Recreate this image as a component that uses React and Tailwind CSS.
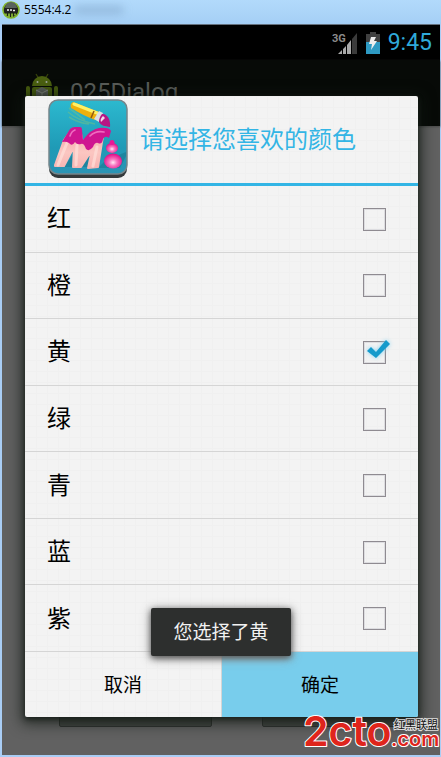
import { useState } from 'react'

const colors = ['红', '橙', '黄', '绿', '青', '蓝', '紫']

function EmulatorIcon() {
  return (
    <svg width="18" height="18" viewBox="0 0 18 18" className="shrink-0">
      <circle cx="9" cy="9" r="8" fill="#1c2119" stroke="#83b62c" strokeWidth="1.6" />
      <path d="M3 7a6 6 0 0 1 12 0z" fill="#59635c" />
      <rect x="2.5" y="7" width="13" height="4.5" rx="1" fill="#222" />
      <path d="M5 9h2M8 9h2M11 9.5h2" stroke="#eee" strokeWidth="1.4" />
      <path d="M4 12.5v2M7 12.5v3.5M10 12.5v3.5M13 12.5v2" stroke="#94c83d" strokeWidth="1.6" />
    </svg>
  )
}

function AndroidIcon() {
  return (
    <svg width="32" height="42" viewBox="0 0 32 42" className="shrink-0">
      <path d="M10 2l3 5M22 2l-3 5" stroke="#35420c" strokeWidth="1.3" />
      <path d="M6 14a10 10 0 0 1 20 0z" fill="#4a5f10" />
      <circle cx="11.5" cy="10" r="1" fill="#a0a8a0" />
      <circle cx="20.5" cy="10" r="1" fill="#a0a8a0" />
      <rect x="0" y="14" width="4" height="16" rx="2" fill="#455a0e" />
      <rect x="28" y="14" width="4" height="16" rx="2" fill="#455a0e" />
      <rect x="6" y="15" width="20" height="21" rx="2" fill="#455a0e" />
      <path d="M16 15l6 3v7l-6 4-6-4v-7z" fill="#565b56" />
      <path d="M10 18l6 3 6-3M16 21v8" stroke="#80857d" fill="none" />
    </svg>
  )
}

function SignalIcon() {
  return (
    <svg width="26" height="24" viewBox="0 0 26 24">
      <text x="0" y="11" fill="#8b8b8b" fontFamily="Roboto, sans-serif" fontWeight="700" fontSize="11">3G</text>
      <path d="M6 23L10 19V23zM11 18L14 15V23H11zM15 14L19 9V23H15z" fill="#aaa" />
      <path d="M20 8L25 2V23H20z" fill="#3b3b3b" />
    </svg>
  )
}

function BatteryIcon() {
  return (
    <svg width="14" height="22" viewBox="0 0 14 22">
      <path d="M4 0h6v2h4v8H0V2h4z" fill="#404040" />
      <path d="M0 10h14v12H0z" fill="#2e9ac3" />
      <path d="M5 5h5L8 9h3L5 18l1-6H3z" fill="#eee" />
    </svg>
  )
}

function PaintIcon() {
  return (
    <svg width="80" height="80" viewBox="0 0 80 80" className="shrink-0">
      <defs>
        <linearGradient id="tile" x1="0" y1="0" x2="0" y2="1">
          <stop offset="0" stopColor="#2cb9cf" />
          <stop offset=".65" stopColor="#1f9ab6" />
          <stop offset="1" stopColor="#2b93b4" />
        </linearGradient>
        <linearGradient id="leg" x1="0" y1="0" x2="0" y2="1">
          <stop offset="0" stopColor="#f2a0a4" />
          <stop offset=".6" stopColor="#fbc6c1" />
          <stop offset="1" stopColor="#f7b5b3" />
        </linearGradient>
        <radialGradient id="ball" cx=".5" cy=".6" r=".55">
          <stop offset="0" stopColor="#ffeaf6" />
          <stop offset=".4" stopColor="#f977c1" />
          <stop offset="1" stopColor="#e3128c" />
        </radialGradient>
      </defs>
      <rect x="1" y="6" width="78" height="73" rx="9" fill="#34393b" />
      <rect x="1" y="1" width="78" height="74" rx="9" fill="url(#tile)" stroke="#75858a" strokeWidth="1.5" />
      <path d="M16 68l10-14v14zM33 68l8-14-1 14zM50 69l8-8 20-8v4l-6 12z" fill="#176f85" opacity=".45" />
      {/* painted body */}
      <path
        d="M7 66L16 41l8-11h8l3 14 13-12h8l-2 11-4 25-10 1 4-18-11 17-8 0 1-20-10 19-9 0z"
        fill="url(#leg)"
        stroke="url(#leg)"
        strokeWidth="2"
        strokeLinejoin="round"
      />
      <path d="M19 44L10 66M29 46l-1 20M49 48l-4 19" stroke="#ffe0da" strokeWidth="3" strokeLinecap="round" opacity=".7" />
      {/* glossy tops */}
      <path d="M14 43L22 30Q24 28 27 28H32Q34 28 34 31L35 41Q43 30 51 29Q61 28 63 32L61 39Q57 36 55 40Q54 46 50 44Q47 43 45 48Q41 53 38 50Q36 44 33 45Q29 46 27 43Q24 48 21 44Q18 42 14 43Z" fill="#cf1591" />
      <path d="M22 37c1-3 2-5 5-6M42 37c4-4 9-5 14-4" stroke="#ee6bc0" strokeWidth="1.6" fill="none" strokeLinecap="round" />
      {/* bottle */}
      <ellipse cx="65" cy="62" rx="9" ry="7.5" fill="url(#ball)" />
      <ellipse cx="64" cy="49" rx="6" ry="5" fill="url(#ball)" />
      <circle cx="64" cy="43.5" r="2.5" fill="#e81997" />
      {/* brush */}
      <path d="M20 13c8 7 17 10 27 12M21 18c6 4 12 6 20 7M21 9l16 12" stroke="#6fbf86" strokeWidth="1.6" opacity=".55" fill="none" />
      <path d="M25 3c9 3 17 7 26 10l-4 8C39 18 31 14 23 9c-1-3 0-5 2-6z" fill="#eeb00d" />
      <path d="M26 5l23 9" stroke="#fff166" strokeWidth="3" strokeLinecap="round" />
      <path d="M46 12l-3 7" stroke="#8f5812" strokeWidth="1.5" />
      <path d="M51 12l4 2-4 9-5-3z" fill="#dfdfe2" />
      <path d="M54 15c5-1 9 6 8 13-5-1-9-1-11-5 0-3 1-6 3-8z" fill="#b71684" />
      <path d="M55 17c-2 2-3 4-2 6l4-4z" fill="#f3d8e9" />
    </svg>
  )
}

function ColorRow({ name, checked, onToggle }) {
  return (
    <li className="flex flex-1 border-b border-[#d5d5d5]">
      <label className="flex flex-1 items-center justify-between pt-px pl-[22px] pr-8 text-2xl text-black">
        {name}
        <span className="relative h-[23px] w-[23px]">
          <input
            type="checkbox"
            checked={checked}
            onChange={onToggle}
            className="block h-full w-full appearance-none border border-[#8f8b91] shadow-[inset_0_0_0_1px_#dddde0]"
          />
          {checked && (
            <svg className="pointer-events-none absolute -top-1 left-0 drop-shadow-[0_0_2px_#7fd2f2]" width="30" height="26" viewBox="0 0 30 26">
              <path d="M4 14l4-4 5 5L23 3l4 4-14 14z" fill="#159acb" />
            </svg>
          )}
        </span>
      </label>
    </li>
  )
}

function SiteLogo() {
  return (
    <svg width="138" height="64" viewBox="0 0 138 64" role="img" aria-label="2cto.com 红黑联盟">
      <g fontFamily="Inter, sans-serif" fontWeight="600" fill="#df251c" stroke="#fff" strokeWidth="2" paintOrder="stroke" strokeLinejoin="round">
        <text x="1" y="55" fontSize="41">2cto</text>
        <text x="89" y="55" fontSize="20">.com</text>
      </g>
      <text x="92" y="38" fontFamily="'Noto Sans CJK SC', sans-serif" fontSize="11" fill="#111" stroke="#ddd" strokeWidth="2" paintOrder="stroke">
        红黑联盟
      </text>
    </svg>
  )
}

export default function App() {
  const [picked, setPicked] = useState(['黄'])

  const toggle = name =>
    setPicked(list => (list.includes(name) ? list.filter(c => c !== name) : [...list, name]))

  return (
    <div className="flex min-h-screen flex-col bg-[#a9cdf5] font-[Roboto,'Noto_Sans_CJK_SC',sans-serif]">
      <header className="flex h-6 items-center gap-1 bg-linear-to-b from-[#b2dafb] to-[#a5cff5] pb-1 pl-0.5">
        <EmulatorIcon />
        <h1 className="font-['Open_Sans',sans-serif] text-xs text-black">5554:4.2</h1>
        <span className="h-2 w-12 bg-[#6b8fb5]/40 blur-xs" />
      </header>

      <div className="relative mr-px mb-0.5 ml-0.5 grid flex-1 border-t border-[#65717e] bg-[#616161]">
        {/* dimmed activity behind the dialog */}
        <div className="flex flex-col [grid-area:1/1]">
          <div className="flex h-[35px] items-center justify-end gap-2 bg-black pr-2">
            <SignalIcon />
            <BatteryIcon />
            <time className="pt-0.5 text-[23px] text-[#2fa9d9]">9:45</time>
          </div>
          <div className="flex h-[66px] items-start gap-3 bg-[#070a07] pt-3 pl-6 shadow-[0_1px_2px_#484848]">
            <AndroidIcon />
            <span className="pt-1 text-2xl text-[#5a5d59]">025Dialog</span>
          </div>
          <div className="mt-auto mb-7 flex gap-[50px] pr-[26px] pl-[57px]">
            <div className="h-11 flex-1 rounded-xs border border-[#303330] bg-[#434743]" />
            <div className="h-11 flex-1 rounded-xs border border-[#303330] bg-[#434743]" />
          </div>
        </div>

        <div className="pt-[71px] pr-[22px] pb-9 pl-[23px] [grid-area:1/1]">
          <section
            role="dialog"
            aria-labelledby="dialog-title"
            className="relative rounded-xs bg-[#f3f3f3] bg-[linear-gradient(#f0f0f0_1px,transparent_1px),linear-gradient(90deg,#f0f0f0_1px,transparent_1px)] bg-size-[11px_11px] shadow-[0_2px_5px_#1a211c,0_3px_14px_4px_#101812aa]"
          >
            <div className="flex h-[90px] items-center gap-3 border-b-3 border-[#33b5e5] pb-0.5 pl-[23px]">
              <PaintIcon />
              <h2 id="dialog-title" className="pt-0.5 text-2xl text-[#33b5e5]">请选择您喜欢的颜色</h2>
            </div>

            <ul className="flex min-h-[466px] flex-col">
              {colors.map(name => (
                <ColorRow key={name} name={name} checked={picked.includes(name)} onToggle={() => toggle(name)} />
              ))}
            </ul>

            <div className="flex h-[65px] text-[19px] text-black">
              <button type="button" className="flex-1 border-r border-[#d5d5d5] pt-1">取消</button>
              <button type="button" className="flex-1 rounded-br-xs bg-[#78cdec] pt-1">确定</button>
            </div>

            <div
              role="status"
              className="absolute bottom-[61px] left-[126px] flex h-12 w-[140px] items-center justify-center rounded-xs bg-[#2d2f2e] pt-0.5 text-[19px] text-[#f2f2f2] shadow-[0_2px_6px_#555,0_2px_12px_#999]"
            >
              您选择了黄
            </div>
          </section>
        </div>

        <div className="absolute right-0 bottom-0">
          <SiteLogo />
        </div>
      </div>
    </div>
  )
}
